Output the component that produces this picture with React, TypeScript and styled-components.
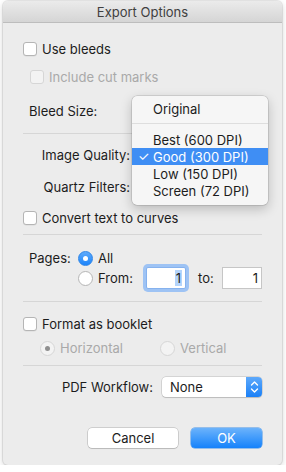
import React from "react";
import styled, { createGlobalStyle, css } from "styled-components";

const Global = createGlobalStyle`
  html, body { margin: 0; padding: 0; background: #ffffff; }
  body { font-family: Inter, "Noto Sans", "Liberation Sans", sans-serif; font-size: 13px; color: #1c1c1c; }
  * { box-sizing: border-box; }
`;

const Window = styled.div`
  position: relative;
  margin: 1px 0 0 3px;
  width: 279px;
  height: 464px;
  background: #ececec;
  border-radius: 5px;
  box-shadow: 0 0 0 1px rgba(0,0,0,0.08), 0 2px 6px rgba(0,0,0,0.18);
  overflow: visible;
`;

const TitleBar = styled.div`
  height: 22px;
  border-radius: 5px 5px 0 0;
  background: linear-gradient(#ebebeb, #d5d5d5);
  border-bottom: 1px solid #bdbdbd;
  display: flex;
  align-items: center;
  justify-content: center;
  color: #404040;
  font-size: 13px;
`;

const Content = styled.div`
  padding: 0 20px;
  display: flex;
  flex-direction: column;
`;

const Row = styled.div<{ $mt: number; $indent?: number }>`
  display: flex;
  align-items: center;
  height: 20px;
  margin-top: ${p => p.$mt}px;
  padding-left: ${p => p.$indent ?? 0}px;
`;

const Sep = styled.div<{ $mt: number }>`
  height: 1px;
  background: #d6d6d6;
  margin-top: ${p => p.$mt}px;
`;

const Text = styled.span<{ $disabled?: boolean }>`
  color: ${p => (p.$disabled ? "#a9a9a9" : "#1c1c1c")};
  white-space: nowrap;
`;

const Box = styled.span<{ $disabled?: boolean }>`
  width: 14px;
  height: 14px;
  border-radius: 3px;
  flex: none;
  margin-right: 5px;
  background: ${p => (p.$disabled ? "#f3f3f3" : "#ffffff")};
  border: 1px solid ${p => (p.$disabled ? "#d6d6d6" : "#b5b5b5")};
  box-shadow: ${p => (p.$disabled ? "none" : "0 0.5px 0.5px rgba(0,0,0,0.08)")};
`;

const Radio = styled.span<{ $on?: boolean; $disabled?: boolean }>`
  width: 15px;
  height: 15px;
  border-radius: 50%;
  flex: none;
  margin-right: 5px;
  display: flex;
  align-items: center;
  justify-content: center;
  ${p =>
    p.$on && !p.$disabled
      ? css`
          background: linear-gradient(#5fabfb, #1b84fb);
          border: 1px solid #2d85e8;
        `
      : p.$disabled
      ? css`
          background: #f3f3f3;
          border: 1px solid #d6d6d6;
        `
      : css`
          background: #ffffff;
          border: 1px solid #b5b5b5;
        `}
  &::after {
    content: "";
    display: ${p => (p.$on ? "block" : "none")};
    width: 5px;
    height: 5px;
    border-radius: 50%;
    background: ${p => (p.$disabled ? "#8f8f8f" : "#ffffff")};
  }
`;

const Label = styled.span<{ $w: number; $right?: boolean; $disabled?: boolean; $ml?: number }>`
  width: ${p => p.$w}px;
  flex: none;
  margin-left: ${p => p.$ml ?? 0}px;
  text-align: ${p => (p.$right ? "right" : "left")};
  color: ${p => (p.$disabled ? "#a9a9a9" : "#1c1c1c")};
  white-space: nowrap;
`;

const Field = styled.div<{ $w: number }>`
  width: ${p => p.$w}px;
  height: 20px;
  margin-left: 2px;
  background: #fff;
  border: 1px solid #c8c8c8;
  border-radius: 4px;
`;

const NumInput = styled.div<{ $focus?: boolean }>`
  width: 40px;
  height: 22px;
  background: #fff;
  border: 1px solid ${p => (p.$focus ? "#86b2ee" : "#c6c6c6")};
  box-shadow: ${p => (p.$focus ? "0 0 0 3px #9ec3f4" : "none")};
  border-radius: ${p => (p.$focus ? "2px" : "0")};
  display: flex;
  align-items: center;
  justify-content: flex-end;
  padding-right: 3px;
`;

const Sel = styled.span`
  background: #b4d4fb;
  padding: 0 1px;
  line-height: 16px;
`;

const Popup = styled.div`
  width: 100px;
  height: 20px;
  margin-left: 9px;
  background: #fff;
  border-radius: 4px;
  box-shadow: 0 0 0 0.5px rgba(0,0,0,0.2), 0 1px 1px rgba(0,0,0,0.12);
  display: flex;
  align-items: center;
  overflow: hidden;
`;

const PopupText = styled.span`
  flex: 1;
  padding-left: 8px;
`;

const Stepper = styled.span`
  width: 16px;
  height: 20px;
  background: linear-gradient(#5ea9fb, #1a80f7);
  display: flex;
  align-items: center;
  justify-content: center;
`;

const ButtonRow = styled.div`
  display: flex;
  justify-content: flex-end;
  gap: 13px;
  margin-top: 31px;
`;

const Button = styled.div<{ $primary?: boolean; $w: number }>`
  width: ${p => p.$w}px;
  height: 20px;
  border-radius: 4px;
  display: flex;
  align-items: center;
  justify-content: center;
  ${p =>
    p.$primary
      ? css`
          background: linear-gradient(#6cb3fb, #1582fb);
          color: #fff;
          box-shadow: 0 0 0 0.5px #3f8fe8;
        `
      : css`
          background: #fff;
          color: #1c1c1c;
          box-shadow: 0 0 0 0.5px rgba(0,0,0,0.25), 0 1px 1px rgba(0,0,0,0.1);
        `}
`;

const Menu = styled.div`
  position: absolute;
  left: 129px;
  top: 95px;
  width: 136px;
  padding: 4px 0 6px;
  background: #f6f6f6;
  border-radius: 5px;
  box-shadow: 0 0 0 0.5px rgba(0,0,0,0.2), 0 4px 12px rgba(0,0,0,0.22);
`;

const MenuItem = styled.div<{ $active?: boolean }>`
  height: 17px;
  display: flex;
  align-items: center;
  padding-left: 21px;
  position: relative;
  background: ${p => (p.$active ? "#3f8ef4" : "transparent")};
  color: ${p => (p.$active ? "#fff" : "#1c1c1c")};
  white-space: nowrap;
`;

const Check = styled.span`
  position: absolute;
  left: 6px;
  top: 0;
  line-height: 17px;
  font-size: 13px;
`;

const MenuSep = styled.div`
  height: 1px;
  background: #dedede;
  margin: 6px 0 7px;
`;

export default function App() {
  return (
    <>
      <Global />
      <Window>
        <TitleBar>Export Options</TitleBar>
        <Content>
          <Row $mt={16}>
            <Box />
            <Text>Use bleeds</Text>
          </Row>
          <Row $mt={8} $indent={7}>
            <Box $disabled />
            <Text $disabled>Include cut marks</Text>
          </Row>
          <Row $mt={14} $indent={6}>
            <Label $w={103}>Bleed Size:</Label>
            <Field $w={120} />
          </Row>
          <Sep $mt={12} />
          <Row $mt={11}>
            <Label $w={107} $right>Image Quality:</Label>
            <Field $w={120} />
          </Row>
          <Row $mt={12}>
            <Label $w={107} $right>Quartz Filters:</Label>
            <Field $w={120} />
          </Row>
          <Row $mt={11}>
            <Box />
            <Text>Convert text to curves</Text>
          </Row>
          <Sep $mt={6} />
          <Row $mt={13} $indent={6}>
            <Label $w={49}>Pages:</Label>
            <Radio $on />
            <Text>All</Text>
          </Row>
          <Row $mt={0} $indent={55}>
            <Radio />
            <Label $w={48}>From:</Label>
            <NumInput $focus>
              <Sel>1</Sel>
            </NumInput>
            <Label $w={24} $ml={12}>to:</Label>
            <NumInput>1</NumInput>
          </Row>
          <Sep $mt={13} />
          <Row $mt={12}>
            <Box />
            <Text>Format as booklet</Text>
          </Row>
          <Row $mt={4} $indent={17}>
            <Radio $on $disabled />
            <Label $w={100} $disabled>Horizontal</Label>
            <Radio $disabled />
            <Text $disabled>Vertical</Text>
          </Row>
          <Sep $mt={7} />
          <Row $mt={11}>
            <Label $w={130} $right>PDF Workflow:</Label>
            <Popup>
              <PopupText>None</PopupText>
              <Stepper>
                <svg width="9" height="14" viewBox="0 0 9 14">
                  <path d="M1.5 5 L4.5 2 L7.5 5 M1.5 9 L4.5 12 L7.5 9" fill="none" stroke="#fff" strokeWidth="1.4" strokeLinecap="round" strokeLinejoin="round" />
                </svg>
              </Stepper>
            </Popup>
          </Row>
          <ButtonRow>
            <Button $w={90}>Cancel</Button>
            <Button $primary $w={71}>OK</Button>
          </ButtonRow>
        </Content>
        <Menu>
          <MenuItem>Original</MenuItem>
          <MenuSep />
          <MenuItem>Best (600 DPI)</MenuItem>
          <MenuItem $active>
            <Check>✓</Check>Good (300 DPI)
          </MenuItem>
          <MenuItem>Low (150 DPI)</MenuItem>
          <MenuItem>Screen (72 DPI)</MenuItem>
        </Menu>
      </Window>
    </>
  );
}
